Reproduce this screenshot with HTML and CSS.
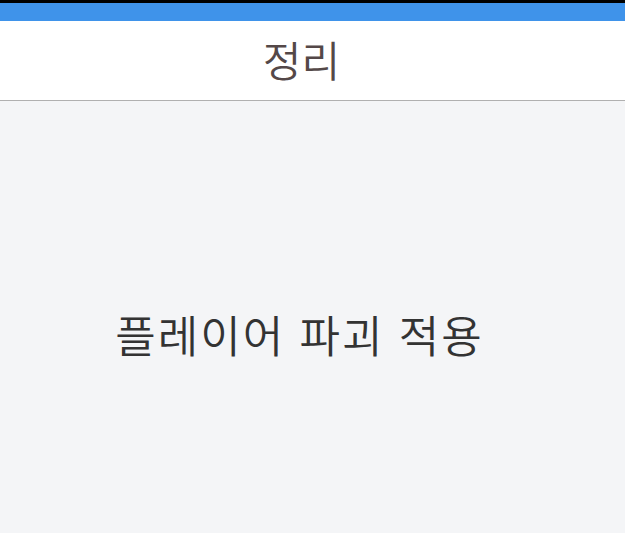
FILE: index.html
```html
<!DOCTYPE html>
<html lang="ko">
<head>
    <meta charset="UTF-8" />
    <meta name="viewport" content="width=device-width, initial-scale=1" />
    <title>정리</title>
    <link rel="stylesheet" href="styles.css">
</head>
<body>
    <div class="top-strip"></div>
    <div class="status-bar"></div>
    <header class="title-bar">
        <h1>정리</h1>
    </header>
    <main class="content">
        <p class="message">플레이어 파괴 적용</p>
    </main>
</body>
</html>
```

FILE: styles.css
```css
* {
    box-sizing: border-box;
}

html, body {
    height: 100%;
}

body {
    margin: 0;
    display: flex;
    flex-direction: column;
    background: #f4f5f7;
    font-family: "Noto Sans CJK KR", "Noto Sans", sans-serif;
}

.top-strip {
    height: 3px;
    background: #000;
}

.status-bar {
    height: 18px;
    background: #3f93ea;
}

.title-bar {
    height: 80px;
    background: #fff;
    border-bottom: 1px solid #b0b0b0;
    display: flex;
    justify-content: center;
    align-items: center;
    padding: 0 22px 4px 0;
}

.title-bar h1 {
    margin: 0;
    font-size: 42px;
    font-weight: 350;
    color: #544848;
}

.content {
    flex: 1;
    display: flex;
    justify-content: center;
    align-items: center;
    padding: 34px 26px 0 0;
}

.message {
    margin: 0;
    font-size: 44px;
    font-weight: 350;
    letter-spacing: 2px;
    color: #333;
}
```
